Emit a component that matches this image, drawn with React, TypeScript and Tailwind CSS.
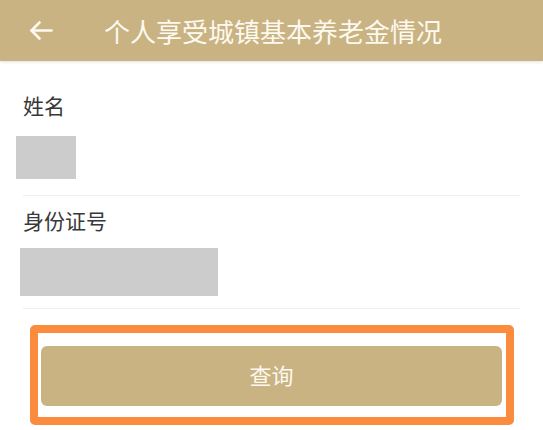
const font = { fontFamily: '"Noto Sans CJK SC", "Noto Sans", sans-serif' }

export default function App() {
  return (
    <div className="min-h-[430px] w-full bg-white" style={font}>
      <header className="flex h-[61px] items-center bg-[#c9b383] shadow-[0_1px_3px_rgba(0,0,0,0.12)]">
        <svg
          className="ml-[29px] shrink-0"
          width="24"
          height="19"
          viewBox="0 0 24 19"
          fill="none"
          stroke="#fdf9ef"
          strokeWidth="2.6"
          strokeLinecap="round"
          strokeLinejoin="round"
        >
          <path d="M22.5 9.5H2.5" />
          <path d="M10.5 1.5L2.5 9.5L10.5 17.5" />
        </svg>
        <h1 className="ml-[51px] text-[26px] leading-none text-[#fdf9ef]">
          个人享受城镇基本养老金情况
        </h1>
      </header>

      <div className="mt-[34px]">
        <p className="ml-[23px] text-[21px] leading-[21px] text-[#383838]">姓名</p>
        <div className="mt-[20px] ml-[16px] h-[43px] w-[60px] bg-[#cccccc]" />
        <div className="mt-[16px] ml-[23px] mr-[23px] h-px bg-[#eeeeee]" />

        <p className="mt-[14px] ml-[23px] text-[21px] leading-[21px] text-[#383838]">身份证号</p>
        <div className="mt-[17px] ml-[20px] h-[48px] w-[198px] bg-[#cccccc]" />
        <div className="mt-[12px] ml-[23px] mr-[23px] h-px bg-[#eeeeee]" />
      </div>

      <div className="mt-[16px] ml-[30px] w-[484px] rounded-[5px] border-[8px] border-[#fb8b3d] pt-[13px] pb-[11px] pl-[3px] pr-[4px]">
        <button className="flex h-[60px] w-full items-center justify-center rounded-[6px] bg-[#c9b383] pb-[5px] text-[22px] leading-none text-[#fdf9ef]">
          查询
        </button>
      </div>
    </div>
  )
}
